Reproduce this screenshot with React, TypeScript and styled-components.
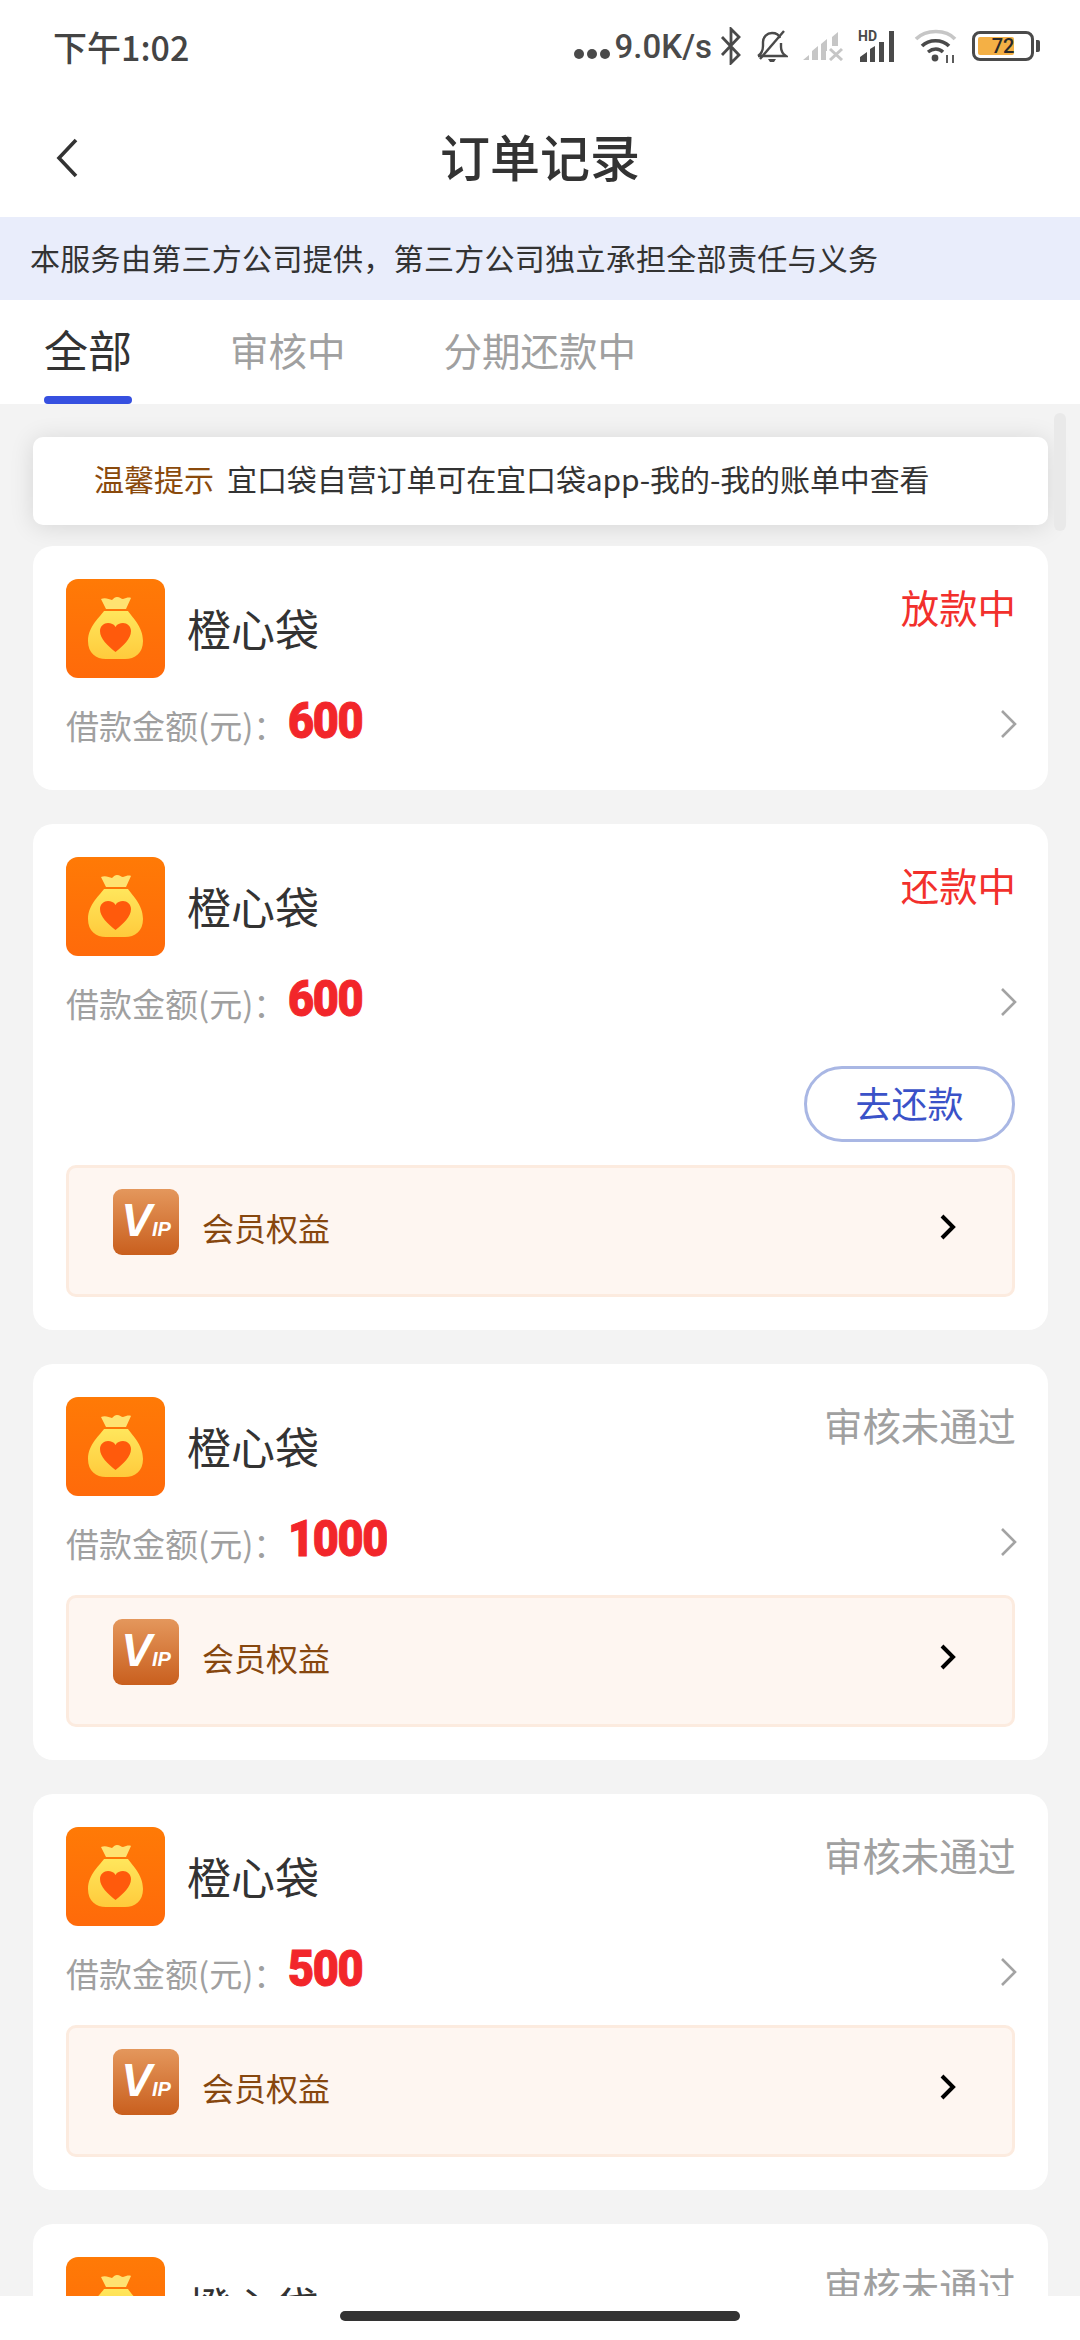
import React from "react"
import styled, { createGlobalStyle } from "styled-components"

type Order = {
  id: number
  amount: string
  status: string
  tone: "red" | "gray"
  repay?: boolean
  vip?: boolean
}

const ORDERS: Order[] = [
  { id: 1, amount: "600", status: "放款中", tone: "red" },
  { id: 2, amount: "600", status: "还款中", tone: "red", repay: true, vip: true },
  { id: 3, amount: "1000", status: "审核未通过", tone: "gray", vip: true },
  { id: 4, amount: "500", status: "审核未通过", tone: "gray", vip: true },
  { id: 5, amount: "600", status: "审核未通过", tone: "gray", vip: true },
]

const BagIcon = () => (
  <svg width="99" height="99" viewBox="0 0 99 99">
    <defs>
      <linearGradient id="bagBg" x1="0" y1="0" x2="0" y2="1">
        <stop offset="0" stopColor="#ff7a06" />
        <stop offset="1" stopColor="#ff6a0a" />
      </linearGradient>
      <linearGradient id="bagFill" x1="0" y1="0" x2="0" y2="1">
        <stop offset="0" stopColor="#ffe65c" />
        <stop offset="1" stopColor="#ffcb3c" />
      </linearGradient>
    </defs>
    <rect width="99" height="99" rx="12" fill="url(#bagBg)" />
    <path
      d="M35 20c4-2 8 0 11 1 2-2 3-3 5-3 3 0 4 2 6 2 3-1 6-2 8-1l-5 11H40z"
      fill="#ffe271"
    />
    <path
      d="M38 32h24c3 5 15 15 15 30 0 12-8 18-18 18H40c-10 0-18-6-18-18 0-15 13-25 16-30z"
      fill="url(#bagFill)"
    />
    <path
      d="M49.500 73C42 67 34 60 34 52c0-5 4-8 8-8 3 0 6 1 7.500 4 1.500-3 4.500-4 7.500-4 4 0 8 3 8 8 0 8-8 15-15.500 21z"
      fill="#ff5a0c"
    />
  </svg>
)

const BackIcon = () => (
  <svg width="26" height="40" viewBox="0 0 26 40">
    <path d="M22 2 5 20l17 18" fill="none" stroke="#333" strokeWidth="3.600" />
  </svg>
)

const ChevronIcon = () => (
  <svg width="18" height="30" viewBox="0 0 18 30">
    <path d="M2 2l13 13L2 28" fill="none" stroke="#a3a3a3" strokeWidth="2.600" />
  </svg>
)

const VipChevron = () => (
  <svg width="18" height="28" viewBox="0 0 18 28">
    <path d="M3 3l11 11L3 25" fill="none" stroke="#000" strokeWidth="4" />
  </svg>
)

const Bluetooth = () => (
  <svg width="22" height="38" viewBox="0 0 22 38">
    <path d="M2 10l17 18-8 8V2l8 8L2 28" fill="none" stroke="#4a4a4a" strokeWidth="2.800" />
  </svg>
)

const BellOff = () => (
  <svg width="32" height="34" viewBox="0 0 32 34">
    <path
      d="M2 27c3-2 5-5 5-10v-4c0-5 4-9 9-9 4 0 7 2 8 5M25 14v4c0 4 2 7 5 9H2"
      fill="none"
      stroke="#4a4a4a"
      strokeWidth="2.400"
    />
    <path d="M12 30h8l-2 3h-4z" fill="#4a4a4a" />
    <path d="M4 30 28 2" stroke="#4a4a4a" strokeWidth="2.400" />
  </svg>
)

const SignalOff = () => (
  <svg width="42" height="30" viewBox="0 0 42 30">
    <g fill="#c6c6c6">
      <path d="M1 29l6-5v5zM10 29V20l6-5v14zM19 29V13l6-5v12h-1v9z" />
      <path d="M30 6l6-5v14h-6z" />
    </g>
    <path d="M28 18l12 11M40 18 28 29" stroke="#c6c6c6" strokeWidth="3" />
  </svg>
)

const SignalHd = () => (
  <svg width="42" height="34" viewBox="0 0 42 34">
    <text x="0" y="12" fontFamily="Roboto, sans-serif" fontWeight="700" fontSize="14" fill="#4a4a4a">
      HD
    </text>
    <path
      d="M2 33v-5l7-5v10zM12 33V20l5-3v16zM21 33V13h5v20zM31 33V2h5v31z"
      fill="#4a4a4a"
    />
  </svg>
)

const Wifi = () => (
  <svg width="44" height="34" viewBox="0 0 44 34">
    <path d="M2 10C12 0 32 0 41 10" fill="none" stroke="#c6c6c6" strokeWidth="3.600" />
    <path d="M8 17c7-7 20-7 27 0" fill="none" stroke="#4a4a4a" strokeWidth="3.600" />
    <path d="M14 23c5-4 11-4 15 0" fill="none" stroke="#4a4a4a" strokeWidth="3.400" />
    <circle cx="21" cy="29" r="3.400" fill="#4a4a4a" />
    <path d="M33 34v-8M39 34v-8" stroke="#4a4a4a" strokeWidth="1.800" />
  </svg>
)

const App: React.FC = () => {
  return (
    <Page>
      <GlobalStyle />
      <StatusBar>
        <StatusTime>下午1:02</StatusTime>
        <StatusRight>
          <Dots>
            <i />
            <i />
            <i />
          </Dots>
          <Speed>9.0K/s</Speed>
          <Bluetooth />
          <BellOff />
          <SignalOff />
          <SignalHd />
          <Wifi />
          <Battery>
            <BatteryBody>
              <BatteryFill />
              <BatteryText>72</BatteryText>
            </BatteryBody>
            <BatteryTip />
          </Battery>
        </StatusRight>
      </StatusBar>

      <Header>
        <BackButton>
          <BackIcon />
        </BackButton>
        <Title>订单记录</Title>
      </Header>

      <Notice>本服务由第三方公司提供，第三方公司独立承担全部责任与义务</Notice>

      <Tabs>
        <Tab $active>全部</Tab>
        <Tab>审核中</Tab>
        <Tab>分期还款中</Tab>
      </Tabs>

      <List>
        <ScrollThumb />
        <Tip>
          <TipLabel>温馨提示</TipLabel>
          <TipText>宜口袋自营订单可在宜口袋app-我的-我的账单中查看</TipText>
        </Tip>

        {ORDERS.map(order => (
          <Card key={order.id}>
            <CardHead>
              <BagIcon />
              <AppName>橙心袋</AppName>
              <Status $tone={order.tone}>{order.status}</Status>
            </CardHead>
            <AmountRow>
              <AmountLabel>借款金额(元)：</AmountLabel>
              <AmountCell>
                <Amount>{order.amount}</Amount>
              </AmountCell>
              <ChevronIcon />
            </AmountRow>
            {order.repay && (
              <Actions>
                <RepayButton>去还款</RepayButton>
              </Actions>
            )}
            {order.vip && (
              <VipPanel $tight={order.repay}>
                <VipBadge>
                  <VipV>V</VipV>
                  <VipP>IP</VipP>
                </VipBadge>
                <VipText>会员权益</VipText>
                <VipChevron />
              </VipPanel>
            )}
          </Card>
        ))}
      </List>

      <Footer>
        <HomePill />
      </Footer>
    </Page>
  )
}

export default App

const GlobalStyle = createGlobalStyle`
  html, body {
    margin: 0;
    padding: 0;
    background: #fff;
  }
  * {
    box-sizing: border-box;
  }
`

const Page = styled.div`
  width: 1080px;
  height: 2340px;
  display: flex;
  flex-direction: column;
  overflow: hidden;
  background: #fff;
  font-family: "Noto Sans CJK SC", Roboto, "Noto Sans", sans-serif;
`

const StatusBar = styled.div`
  height: 88px;
  flex: none;
  display: flex;
  align-items: center;
  justify-content: space-between;
  padding: 4px 40px 0 53px;
  color: #444;
`

const StatusTime = styled.div`
  font-size: 34px;
  font-weight: 500;
`

const StatusRight = styled.div`
  display: flex;
  align-items: center;
  gap: 14px;
`

const Dots = styled.div`
  display: flex;
  gap: 3px;
  margin-top: 16px;
  margin-right: -9px;

  i {
    width: 10px;
    height: 10px;
    border-radius: 50%;
    background: #4a4a4a;
  }
`

const Speed = styled.div`
  font-family: Roboto, sans-serif;
  font-size: 33px;
  font-weight: 500;
  color: #4a4a4a;
  margin-right: -6px;
`

const Battery = styled.div`
  display: flex;
  align-items: center;
  gap: 2px;
`

const BatteryBody = styled.div`
  position: relative;
  width: 62px;
  height: 30px;
  border: 3px solid #4a4a4a;
  border-radius: 8px;
  padding: 3px;
`

const BatteryFill = styled.div`
  width: 72%;
  height: 100%;
  background: #f4b045;
  border-radius: 2px;
`

const BatteryText = styled.span`
  position: absolute;
  left: 0;
  right: 0;
  top: 0;
  bottom: 0;
  display: flex;
  align-items: center;
  justify-content: center;
  font-family: Roboto, sans-serif;
  font-size: 20px;
  font-weight: 500;
  color: #2a2a2a;
`

const BatteryTip = styled.div`
  width: 4px;
  height: 12px;
  background: #4a4a4a;
  border-radius: 0 2px 2px 0;
`

const Header = styled.div`
  position: relative;
  height: 129px;
  flex: none;
  display: flex;
  align-items: center;
  justify-content: center;
  padding-top: 4px;
`

const BackButton = styled.div`
  position: absolute;
  left: 54px;
  top: 50px;
  display: flex;
`

const Title = styled.h1`
  margin: 0;
  font-size: 50px;
  font-weight: 500;
  color: #333;
`

const Notice = styled.div`
  height: 83px;
  flex: none;
  display: flex;
  align-items: center;
  padding: 0 0 3px 30px;
  background: #e9edfb;
  font-size: 30px;
  letter-spacing: 0.3px;
  color: #333;
`

const Tabs = styled.div`
  height: 104px;
  flex: none;
  display: flex;
  padding-left: 44px;
  gap: 98px;
  background: #fff;
`

const Tab = styled.div<{ $active?: boolean }>`
  position: relative;
  height: 100%;
  display: flex;
  align-items: center;
  padding-bottom: 6px;
  font-size: ${p => (p.$active ? "44px" : "38.5px")};
  color: ${p => (p.$active ? "#333" : "#a0a0a0")};

  ${p =>
    p.$active &&
    `
    &::after {
      content: "";
      position: absolute;
      left: 0;
      right: 0;
      bottom: 0;
      height: 8px;
      border-radius: 4px;
      background: #3650e0;
    }
  `}
`

const List = styled.div`
  position: relative;
  flex: 1;
  min-height: 0;
  overflow: hidden;
  display: flex;
  flex-direction: column;
  gap: 34px;
  padding: 33px 32px 0 33px;
  background: #f3f3f3;
`

const ScrollThumb = styled.div`
  position: absolute;
  right: 14px;
  top: 9px;
  width: 12px;
  height: 118px;
  border-radius: 6px;
  background: #e9e9e9;
`

const Tip = styled.div`
  height: 88px;
  flex: none;
  margin-bottom: -13px;
  display: flex;
  align-items: center;
  padding: 0 0 6px 61px;
  gap: 13px;
  background: #fff;
  border-radius: 10px;
  box-shadow: 0 2px 24px rgba(0, 0, 0, 0.12);
  font-size: 30px;
`

const TipLabel = styled.span`
  color: #8a4a0c;
`

const TipText = styled.span`
  color: #333;
  letter-spacing: -0.1px;
`

const Card = styled.div`
  flex: none;
  padding: 33px;
  background: #fff;
  border-radius: 20px;
`

const CardHead = styled.div`
  display: flex;
  align-items: flex-start;
  height: 99px;

  svg {
    flex: none;
    display: block;
  }
`

const AppName = styled.div`
  margin: 17px 0 0 22px;
  font-size: 44px;
  line-height: 64px;
  color: #333;
`

const Status = styled.div<{ $tone: "red" | "gray" }>`
  margin: 0 -1px 0 auto;
  font-size: 38.4px;
  line-height: 54px;
  color: ${p => (p.$tone === "red" ? "#f2302c" : "#a0a0a0")};
`

const AmountRow = styled.div`
  height: 60px;
  margin-top: 19px;
  display: flex;
  align-items: center;

  svg {
    margin: -6px -3px 0 0;
  }
`

const AmountLabel = styled.span`
  width: 222px;
  flex: none;
  margin-top: -4px;
  font-size: 33px;
  color: #a0a0a0;
`

const AmountCell = styled.div`
  flex: 1;
`

const Amount = styled.span`
  display: inline-block;
  transform: scaleX(0.9);
  transform-origin: left center;
  margin-top: -12px;
  font-family: Roboto, sans-serif;
  font-size: 50px;
  font-weight: 900;
  letter-spacing: -1.5px;
  line-height: 1;
  color: #f2262a;
  -webkit-text-stroke: 1px #f2262a;
`

const Actions = styled.div`
  display: flex;
  justify-content: flex-end;
  margin-top: 31px;
`

const RepayButton = styled.button`
  width: 211px;
  height: 76px;
  padding: 0 0 4px;
  background: #fff;
  border: 3px solid #a9b7e4;
  border-radius: 38px;
  font-family: inherit;
  font-size: 36px;
  color: #3a52c8;
`

const VipPanel = styled.div<{ $tight?: boolean }>`
  height: 132px;
  margin-top: ${p => (p.$tight ? "23px" : "20px")};
  display: flex;
  align-items: center;
  padding: 0 55px 8px 44px;
  background: #fef6f1;
  border: 3px solid #fcebdf;
  border-radius: 10px;
`

const VipBadge = styled.div`
  width: 66px;
  height: 66px;
  flex: none;
  margin-top: -10px;
  display: flex;
  align-items: baseline;
  justify-content: center;
  padding-top: 8px;
  border-radius: 9px;
  background: linear-gradient(180deg, #e4975c, #c95f1e);
  color: #fff;
  font-family: "Liberation Sans", sans-serif;
  font-style: italic;
  font-weight: 700;
  line-height: 1;
`

const VipV = styled.span`
  font-size: 46px;
`

const VipP = styled.span`
  font-size: 20px;
`

const VipText = styled.div`
  flex: 1;
  margin-left: 23px;
  font-size: 32px;
  color: #87470f;
`

const Footer = styled.div`
  position: relative;
  height: 44px;
  flex: none;
  display: flex;
  justify-content: center;
  padding-top: 15px;
  background: #fff;
`

const HomePill = styled.div`
  width: 400px;
  height: 10px;
  border-radius: 5px;
  background: #333;
`
